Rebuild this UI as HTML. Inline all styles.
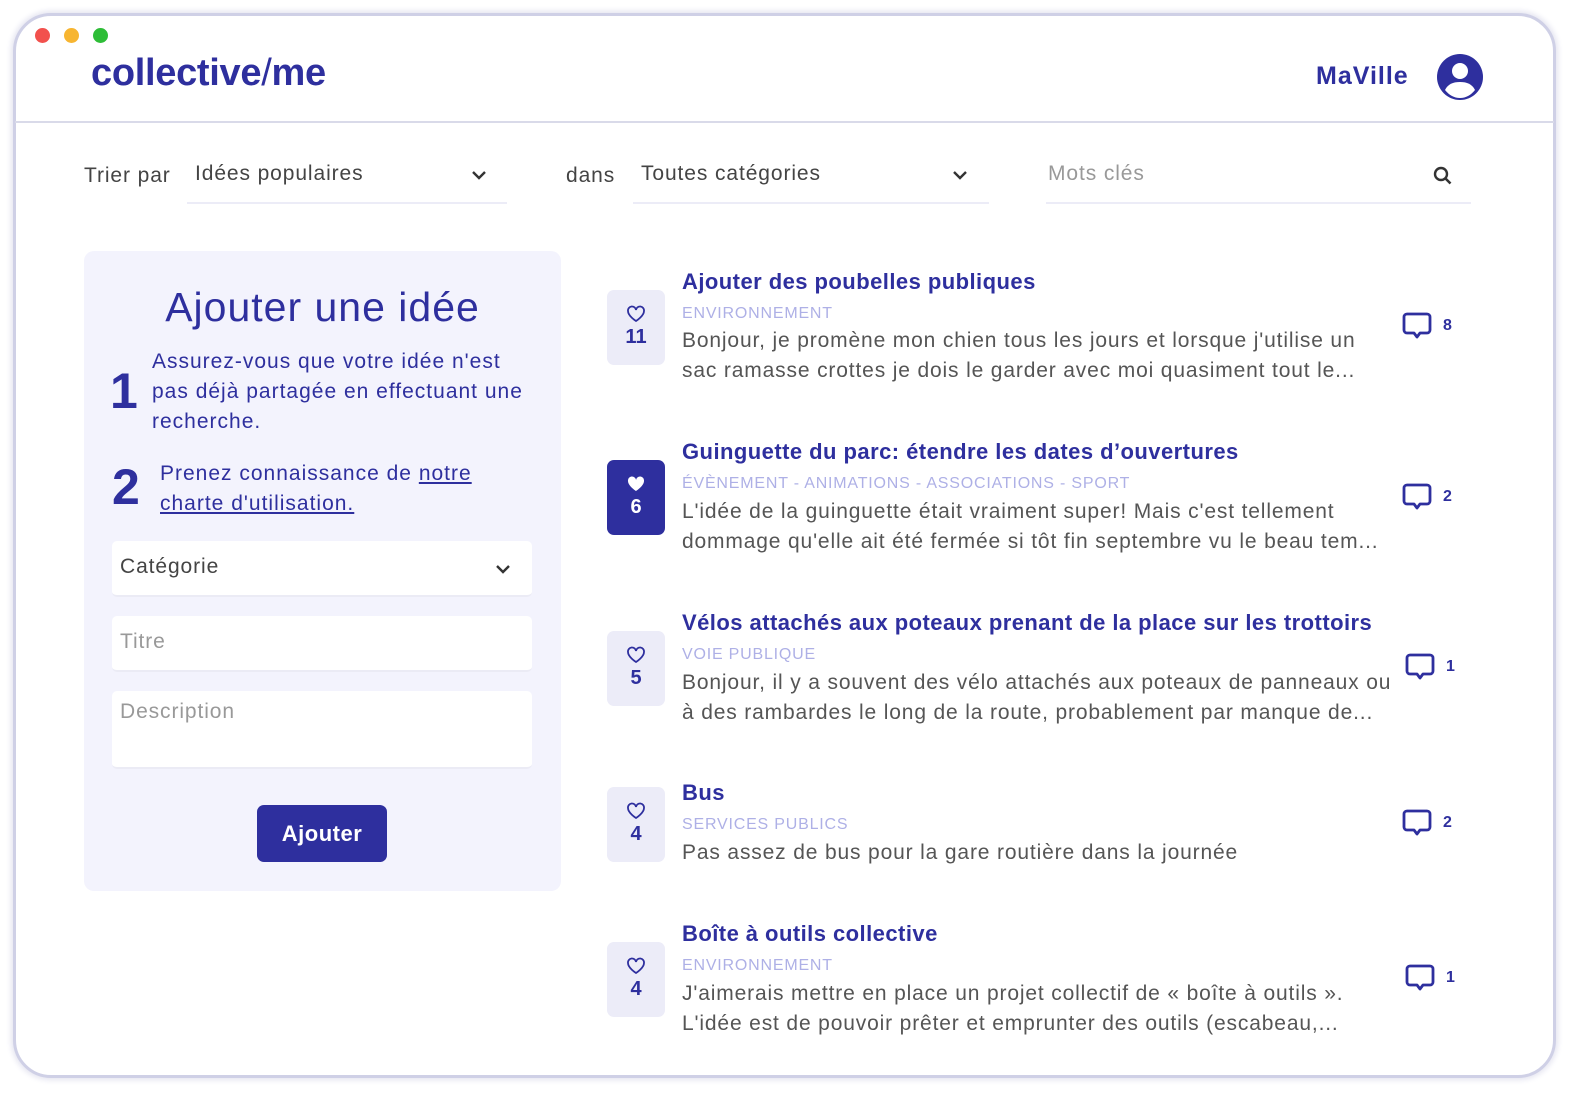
<!DOCTYPE html>
<html><head><meta charset="utf-8"><style>
*{margin:0;padding:0;box-sizing:border-box}
body{width:1580px;height:1098px;background:#fff;font-family:"Liberation Sans",sans-serif;position:relative;overflow:hidden}
.a{position:absolute;white-space:nowrap}
.frame{position:absolute;left:13px;top:13px;width:1543px;height:1065px;border:3px solid #cfd0e6;border-radius:38px;box-shadow:0 0 6px 2px #e4e4f0;background:#fff}
.p{color:#2e2f9e}
.dot{position:absolute;width:15px;height:15px;border-radius:50%;top:28px}
.ul{position:absolute;height:2px;background:#ececf7}
.chev{position:absolute}
.panel{position:absolute;left:84px;top:251px;width:477px;height:640px;background:#f3f3fd;border-radius:10px}
.in{position:absolute;left:112px;width:420px;background:#fff;border-radius:5px;border-bottom:2px solid #ebebf5}
.badge{position:absolute;left:607px;width:58px;height:75px;border-radius:7px;background:#ececf8;color:#2e2f9e;text-align:center;font-weight:bold;font-size:20px}
.badge svg{display:block;margin:15px auto 3px}
.badge.on{background:#2e2f9e;color:#fff}
.t{font-size:22px;font-weight:bold;color:#2e2f9e;letter-spacing:0.45px}
.c{font-size:16px;color:#aeb0e6;letter-spacing:0.8px}
.b{font-size:21px;color:#555;line-height:30px;letter-spacing:0.85px}
.f{font-size:21px;letter-spacing:0.9px}
.cm{position:absolute}
.n{position:absolute;font-size:16px;font-weight:bold;color:#2e2f9e}
</style></head><body>
<div class="frame"></div>
<div class="dot" style="left:35px;background:#f2514d"></div>
<div class="dot" style="left:64px;background:#f7b531"></div>
<div class="dot" style="left:93px;background:#2ebd37"></div>
<div class="a p" style="left:91px;top:52px;font-size:38px;font-weight:bold;letter-spacing:-0.3px">collective<span style="font-weight:normal">/</span>me</div>
<div class="a p" style="left:1316px;top:62px;font-size:25px;font-weight:bold;letter-spacing:1px">MaVille</div>
<svg class="a" style="left:1436px;top:53px" width="48" height="48" viewBox="0 0 48 48"><circle cx="24" cy="24" r="23" fill="#2e2f9e"/><circle cx="24" cy="18" r="8" fill="#fff"/><path d="M9 37c3-6 8-8 15-8s12 2 15 8c-4 5-9 8-15 8s-11-3-15-8z" fill="#fff"/></svg>
<div class="a" style="left:15px;top:121px;width:1539px;height:2px;background:#d9dae9"></div>

<div class="a f" style="left:84px;top:164px;color:#444">Trier par</div>
<div class="a f" style="left:195px;top:162px;color:#444">Idées populaires</div>
<div class="ul" style="left:187px;top:202px;width:320px"></div>
<svg class="chev" style="left:471px;top:169px" width="16" height="12"><path d="M2 3l6 6 6-6" stroke="#333" stroke-width="2.4" fill="none"/></svg>
<div class="a f" style="left:566px;top:164px;color:#444">dans</div>
<div class="a f" style="left:641px;top:162px;color:#444">Toutes catégories</div>
<div class="ul" style="left:633px;top:202px;width:356px"></div>
<svg class="chev" style="left:952px;top:169px" width="16" height="12"><path d="M2 3l6 6 6-6" stroke="#333" stroke-width="2.4" fill="none"/></svg>
<div class="a f" style="left:1048px;top:162px;color:#999">Mots clés</div>
<div class="ul" style="left:1046px;top:202px;width:425px"></div>
<svg class="a" style="left:1432px;top:165px" width="22" height="22"><circle cx="9" cy="9" r="6" stroke="#333" stroke-width="2.4" fill="none"/><path d="M13.5 13.5l5 5" stroke="#333" stroke-width="2.6"/></svg>

<div class="panel"></div>
<div class="a p" style="left:84px;width:477px;text-align:center;top:284px;font-size:41px;letter-spacing:1px">Ajouter une idée</div>
<div class="a p" style="left:110px;top:362px;font-size:50px;font-weight:bold">1</div>
<div class="a p" style="left:152px;top:347px;font-size:21px;line-height:30px;letter-spacing:1px">Assurez-vous que votre idée n'est<br>pas déjà partagée en effectuant une<br>recherche.</div>
<div class="a p" style="left:112px;top:458px;font-size:50px;font-weight:bold">2</div>
<div class="a p" style="left:160px;top:459px;font-size:21px;line-height:30px;letter-spacing:1px">Prenez connaissance de <u>notre</u><br><u>charte d'utilisation.</u></div>
<div class="in" style="top:541px;height:56px"></div>
<div class="a f" style="left:120px;top:555px;color:#444">Catégorie</div>
<svg class="chev" style="left:495px;top:563px" width="16" height="12"><path d="M2 3l6 6 6-6" stroke="#333" stroke-width="2.4" fill="none"/></svg>
<div class="in" style="top:616px;height:56px"></div>
<div class="a f" style="left:120px;top:630px;color:#999">Titre</div>
<div class="in" style="top:691px;height:78px"></div>
<div class="a f" style="left:120px;top:700px;color:#999">Description</div>
<div class="a" style="left:257px;top:805px;width:130px;height:57px;background:#2e2f9e;border-radius:7px;color:#fff;font-size:22px;font-weight:bold;text-align:center;line-height:57px;letter-spacing:0.5px">Ajouter</div>

<div class="badge" style="top:290px"><svg width="20" height="18" viewBox="0 0 20 18"><path d="M10 16S2 11 2 6a4 4 0 0 1 8-1 4 4 0 0 1 8 1c0 5-8 10-8 10z" stroke="#2e2f9e" stroke-width="1.8" fill="none"/></svg>11</div>
<div class="a t" style="left:682px;top:269px">Ajouter des poubelles publiques</div>
<div class="a c" style="left:682px;top:305px">ENVIRONNEMENT</div>
<div class="a b" style="left:682px;top:326px">Bonjour, je promène mon chien tous les jours et lorsque j'utilise un<br>sac ramasse crottes je dois le garder avec moi quasiment tout le...</div>

<div class="badge on" style="top:460px"><svg width="20" height="18" viewBox="0 0 20 18"><path d="M10 16S2 11 2 6a4 4 0 0 1 8-1 4 4 0 0 1 8 1c0 5-8 10-8 10z" fill="#fff"/></svg>6</div>
<div class="a t" style="left:682px;top:439px">Guinguette du parc: étendre les dates d’ouvertures</div>
<div class="a c" style="left:682px;top:475px">ÉVÈNEMENT - ANIMATIONS - ASSOCIATIONS - SPORT</div>
<div class="a b" style="left:682px;top:497px">L'idée de la guinguette était vraiment super! Mais c'est tellement<br>dommage qu'elle ait été fermée si tôt fin septembre vu le beau tem...</div>

<div class="badge" style="top:631px"><svg width="20" height="18" viewBox="0 0 20 18"><path d="M10 16S2 11 2 6a4 4 0 0 1 8-1 4 4 0 0 1 8 1c0 5-8 10-8 10z" stroke="#2e2f9e" stroke-width="1.8" fill="none"/></svg>5</div>
<div class="a t" style="left:682px;top:610px">Vélos attachés aux poteaux prenant de la place sur les trottoirs</div>
<div class="a c" style="left:682px;top:646px">VOIE PUBLIQUE</div>
<div class="a b" style="left:682px;top:668px">Bonjour, il y a souvent des vélo attachés aux poteaux de panneaux ou<br>à des rambardes le long de la route, probablement par manque de...</div>

<div class="badge" style="top:787px"><svg width="20" height="18" viewBox="0 0 20 18"><path d="M10 16S2 11 2 6a4 4 0 0 1 8-1 4 4 0 0 1 8 1c0 5-8 10-8 10z" stroke="#2e2f9e" stroke-width="1.8" fill="none"/></svg>4</div>
<div class="a t" style="left:682px;top:780px">Bus</div>
<div class="a c" style="left:682px;top:816px">SERVICES PUBLICS</div>
<div class="a b" style="left:682px;top:838px">Pas assez de bus pour la gare routière dans la journée</div>

<div class="badge" style="top:942px"><svg width="20" height="18" viewBox="0 0 20 18"><path d="M10 16S2 11 2 6a4 4 0 0 1 8-1 4 4 0 0 1 8 1c0 5-8 10-8 10z" stroke="#2e2f9e" stroke-width="1.8" fill="none"/></svg>4</div>
<div class="a t" style="left:682px;top:921px">Boîte à outils collective</div>
<div class="a c" style="left:682px;top:957px">ENVIRONNEMENT</div>
<div class="a b" style="left:682px;top:979px">J'aimerais mettre en place un projet collectif de « boîte à outils ».<br>L'idée est de pouvoir prêter et emprunter des outils (escabeau,...</div>

<svg class="cm" style="left:1401px;top:311px" width="32" height="32" viewBox="0 0 32 32"><path d="M6 3h20a3 3 0 0 1 3 3v13a3 3 0 0 1-3 3h-7l-3 4-3-4H6a3 3 0 0 1-3-3V6a3 3 0 0 1 3-3z" stroke="#2e2f9e" stroke-width="2.8" fill="none" stroke-linejoin="round"/></svg>
<div class="n" style="left:1443px;top:317px">8</div>
<svg class="cm" style="left:1401px;top:482px" width="32" height="32" viewBox="0 0 32 32"><path d="M6 3h20a3 3 0 0 1 3 3v13a3 3 0 0 1-3 3h-7l-3 4-3-4H6a3 3 0 0 1-3-3V6a3 3 0 0 1 3-3z" stroke="#2e2f9e" stroke-width="2.8" fill="none" stroke-linejoin="round"/></svg>
<div class="n" style="left:1443px;top:488px">2</div>
<svg class="cm" style="left:1404px;top:652px" width="32" height="32" viewBox="0 0 32 32"><path d="M6 3h20a3 3 0 0 1 3 3v13a3 3 0 0 1-3 3h-7l-3 4-3-4H6a3 3 0 0 1-3-3V6a3 3 0 0 1 3-3z" stroke="#2e2f9e" stroke-width="2.8" fill="none" stroke-linejoin="round"/></svg>
<div class="n" style="left:1446px;top:658px">1</div>
<svg class="cm" style="left:1401px;top:808px" width="32" height="32" viewBox="0 0 32 32"><path d="M6 3h20a3 3 0 0 1 3 3v13a3 3 0 0 1-3 3h-7l-3 4-3-4H6a3 3 0 0 1-3-3V6a3 3 0 0 1 3-3z" stroke="#2e2f9e" stroke-width="2.8" fill="none" stroke-linejoin="round"/></svg>
<div class="n" style="left:1443px;top:814px">2</div>
<svg class="cm" style="left:1404px;top:963px" width="32" height="32" viewBox="0 0 32 32"><path d="M6 3h20a3 3 0 0 1 3 3v13a3 3 0 0 1-3 3h-7l-3 4-3-4H6a3 3 0 0 1-3-3V6a3 3 0 0 1 3-3z" stroke="#2e2f9e" stroke-width="2.8" fill="none" stroke-linejoin="round"/></svg>
<div class="n" style="left:1446px;top:969px">1</div>
</body></html>
